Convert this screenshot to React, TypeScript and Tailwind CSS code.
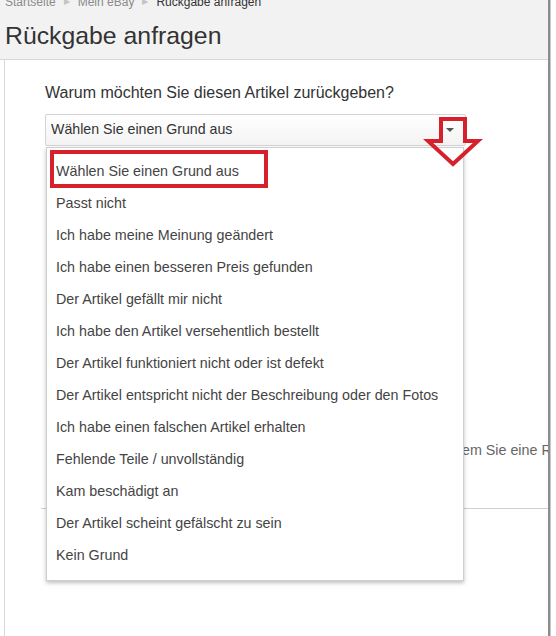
import React from "react";

const REASONS = [
  "Wählen Sie einen Grund aus",
  "Passt nicht",
  "Ich habe meine Meinung geändert",
  "Ich habe einen besseren Preis gefunden",
  "Der Artikel gefällt mir nicht",
  "Ich habe den Artikel versehentlich bestellt",
  "Der Artikel funktioniert nicht oder ist defekt",
  "Der Artikel entspricht nicht der Beschreibung oder den Fotos",
  "Ich habe einen falschen Artikel erhalten",
  "Fehlende Teile / unvollständig",
  "Kam beschädigt an",
  "Der Artikel scheint gefälscht zu sein",
  "Kein Grund",
];

function Crumb({ children, current }: { children: React.ReactNode; current?: boolean }) {
  return <span className={current ? "text-[#333]" : "text-[#8a8a8a]"}>{children}</span>;
}

function Sep() {
  return <span className="mx-[8px] text-[8px] text-[#c4c4c4]">▶</span>;
}

function DownArrow() {
  return (
    <svg width="60" height="54" viewBox="0 0 60 54" className="absolute left-[423px] top-[115px]">
      <polygon
        points="18,4 42,4 42,26 55,26 30,49 5,26 18,26"
        fill="none"
        stroke="#d6202b"
        strokeWidth="4"
        strokeLinejoin="miter"
      />
    </svg>
  );
}

export default function App() {
  return (
    <div
      className="relative flex h-[636px] w-[556px] overflow-hidden bg-white text-[#333]"
      style={{ fontFamily: "'Liberation Sans', Arial, sans-serif" }}
    >
      <div className="flex w-[548px] flex-col overflow-hidden">
        <header className="h-[60px] border-b border-[#d8d8d8] bg-[#f2f2f2] pl-[5px]">
          <div className="-mt-[5px] flex h-[14px] items-center text-[12px] leading-[14px]">
            <Crumb>Startseite</Crumb>
            <Sep />
            <Crumb>Mein eBay</Crumb>
            <Sep />
            <Crumb current>Rückgabe anfragen</Crumb>
          </div>
          <h1 className="mt-[13px] text-[24.8px] leading-[28px] text-[#333]">Rückgabe anfragen</h1>
        </header>

        <main className="ml-[4px] flex-1 border-l border-[#d8d8d8] bg-white pt-[23px]">
          <p className="pl-[40px] text-[16px] leading-[20px] text-[#333]">
            Warum möchten Sie diesen Artikel zurückgeben?
          </p>
          <div className="ml-[40px] mt-[11px] flex h-[32px] w-[421px] items-center justify-between rounded-[2px] border border-[#d4d4d4] bg-gradient-to-b from-white to-[#f3f3f3] pl-[5px] pr-[11px]">
            <span className="text-[14.2px] text-[#333]">Wählen Sie einen Grund aus</span>
            <span className="h-0 w-0 border-x-[4px] border-t-[4px] border-x-transparent border-t-[#555]" />
          </div>

          <p className="mt-[294px] whitespace-nowrap pl-[236px] text-[14.3px] leading-[20px] text-[#666]">
            Sie können das Problem lösen, indem Sie eine Rückgabe anfragen.
          </p>

          <div className="ml-[36px] mt-[48px] border-t border-[#d0d0d0]" />
        </main>
      </div>
      <div className="w-[2px] bg-[#8c8c8c]" />
      <div className="w-[1px] bg-[#c8c8c8]" />

      <ul className="absolute left-[46px] top-[147px] w-[418px] border border-[#cfcfcf] bg-white pb-[8px] pt-[8px] shadow-[0_2px_4px_rgba(0,0,0,0.25)]">
        {REASONS.map((reason) => (
          <li key={reason} className="flex h-[32px] items-center pl-[9px] text-[14.3px] text-[#444]">
            {reason}
          </li>
        ))}
      </ul>

      <div className="absolute left-[50px] top-[150px] h-[38px] w-[218px] border-[4px] border-[#d6202b]" />
      <DownArrow />
    </div>
  );
}
